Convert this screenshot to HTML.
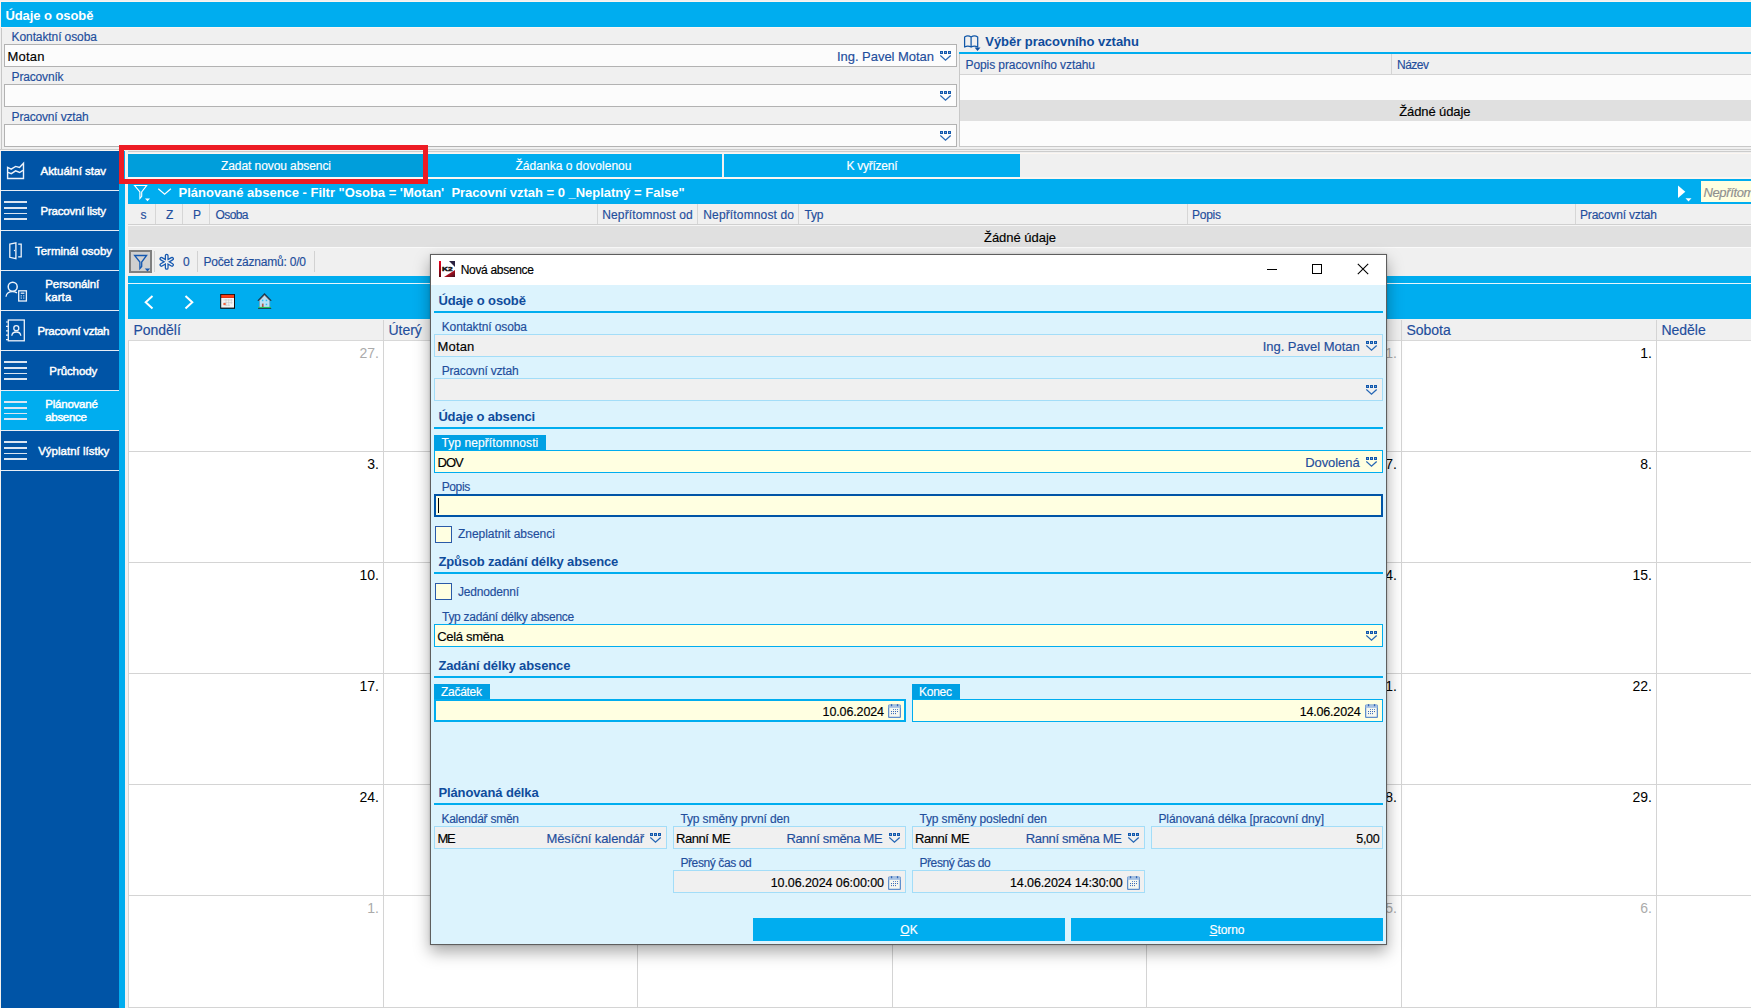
<!DOCTYPE html>
<html><head><meta charset="utf-8"><title>K2</title>
<style>
html,body{margin:0;padding:0;}
html{overflow:hidden;width:1751px;height:1008px;}
body{width:1751px;height:1008px;overflow:hidden;background:#F0F0F0;position:relative;font-family:"Liberation Sans",sans-serif;}
div,span,svg{position:absolute;box-sizing:border-box;}
span{white-space:pre;}
u{text-decoration:underline;}
</style></head><body>
<div style="left:0px;top:1px;width:1751px;height:1px;background:#FBF4EF;"></div>
<div style="left:0px;top:2px;width:1px;height:25px;background:#FBF4EF;"></div>
<div style="left:1px;top:2px;width:1750px;height:25px;background:#00ADEF;"></div>
<span style="left:5.40px;top:5px;font-size:13px;color:#fff;line-height:21px;font-weight:bold;letter-spacing:-0.071px;">Údaje o osobě</span>
<span style="left:11.60px;top:27px;font-size:12px;color:#1F4E9C;line-height:20px;-webkit-text-stroke:0.16px #1F4E9C;letter-spacing:-0.102px;">Kontaktní osoba</span>
<div style="left:4px;top:44px;width:953px;height:23px;background:#FCFCFC;border:1px solid #B2B2B2;"></div>
<svg style="left:940px;top:51px" width="12" height="11" viewBox="0 0 12 11"><rect x="0" y="0" width="3" height="3" fill="#1358AC"/><rect x="1" y="1" width="1" height="1" fill="#6FA0D6"/><rect x="4" y="0" width="3" height="3" fill="#1358AC"/><rect x="5" y="1" width="1" height="1" fill="#6FA0D6"/><rect x="8" y="0" width="3" height="3" fill="#1358AC"/><rect x="9" y="1" width="1" height="1" fill="#6FA0D6"/><path d="M0.3 4.5 L5.5 9.2 L10.7 4.5" fill="none" stroke="#2566B4" stroke-width="1.3"/></svg>
<span style="left:11.60px;top:67px;font-size:12px;color:#1F4E9C;line-height:20px;-webkit-text-stroke:0.16px #1F4E9C;letter-spacing:-0.170px;">Pracovník</span>
<div style="left:4px;top:84px;width:953px;height:23px;background:#FCFCFC;border:1px solid #B2B2B2;"></div>
<svg style="left:940px;top:91px" width="12" height="11" viewBox="0 0 12 11"><rect x="0" y="0" width="3" height="3" fill="#1358AC"/><rect x="1" y="1" width="1" height="1" fill="#6FA0D6"/><rect x="4" y="0" width="3" height="3" fill="#1358AC"/><rect x="5" y="1" width="1" height="1" fill="#6FA0D6"/><rect x="8" y="0" width="3" height="3" fill="#1358AC"/><rect x="9" y="1" width="1" height="1" fill="#6FA0D6"/><path d="M0.3 4.5 L5.5 9.2 L10.7 4.5" fill="none" stroke="#2566B4" stroke-width="1.3"/></svg>
<span style="left:11.60px;top:107px;font-size:12px;color:#1F4E9C;line-height:20px;-webkit-text-stroke:0.16px #1F4E9C;letter-spacing:-0.183px;">Pracovní vztah</span>
<div style="left:4px;top:124px;width:953px;height:23px;background:#FCFCFC;border:1px solid #B2B2B2;"></div>
<svg style="left:940px;top:131px" width="12" height="11" viewBox="0 0 12 11"><rect x="0" y="0" width="3" height="3" fill="#1358AC"/><rect x="1" y="1" width="1" height="1" fill="#6FA0D6"/><rect x="4" y="0" width="3" height="3" fill="#1358AC"/><rect x="5" y="1" width="1" height="1" fill="#6FA0D6"/><rect x="8" y="0" width="3" height="3" fill="#1358AC"/><rect x="9" y="1" width="1" height="1" fill="#6FA0D6"/><path d="M0.3 4.5 L5.5 9.2 L10.7 4.5" fill="none" stroke="#2566B4" stroke-width="1.3"/></svg>
<span style="left:7.60px;top:46px;font-size:13px;color:#000;line-height:21px;-webkit-text-stroke:0.16px #000;letter-spacing:0.167px;">Motan</span>
<span style="left:837.00px;top:46px;font-size:13px;color:#1F4E9C;line-height:21px;-webkit-text-stroke:0.16px #1F4E9C;letter-spacing:-0.037px;">Ing. Pavel Motan</span>
<span style="left:985.30px;top:31px;font-size:13px;color:#0F4C9C;line-height:21px;font-weight:bold;letter-spacing:-0.045px;">Výběr pracovního vztahu</span>
<div style="left:959px;top:52px;width:792px;height:2px;background:#00ADEF;"></div>
<div style="left:959px;top:54px;width:792px;height:93px;background:#FCFCFC;border-left:1px solid #C8C8C8;border-bottom:1px solid #C8C8C8;"></div>
<div style="left:960px;top:54px;width:791px;height:21px;background:#F0F0F0;border-bottom:1px solid #D4D4D4;"></div>
<div style="left:1391px;top:54px;width:1px;height:20px;background:#D4D4D4;"></div>
<span style="left:965.50px;top:55px;font-size:12px;color:#1F4E9C;line-height:20px;-webkit-text-stroke:0.16px #1F4E9C;letter-spacing:-0.087px;">Popis pracovního vztahu</span>
<span style="left:1397.00px;top:55px;font-size:12px;color:#1F4E9C;line-height:20px;-webkit-text-stroke:0.16px #1F4E9C;letter-spacing:-0.504px;">Název</span>
<div style="left:960px;top:100px;width:791px;height:21px;background:#E0E0E0;"></div>
<span style="left:1399.20px;top:101px;font-size:13px;color:#000;line-height:21px;-webkit-text-stroke:0.16px #000;letter-spacing:-0.098px;">Žádné údaje</span>
<svg style="left:962px;top:33px" width="20" height="19" viewBox="962 33 20 19"><path d="M964.6 37 Q967.8 34.9 971.1 37 V47 Q967.8 45.2 964.6 47 Z M971.1 37 Q974.4 34.9 977.7 37 V47 Q974.4 45.2 971.1 47 Z" fill="none" stroke="#1057A8" stroke-width="1.25" stroke-linejoin="round"/><path d="M974.6 47.5 H980.5 L977.5 50.9 Z" fill="#0F50A0"/></svg>
<div style="left:0px;top:149px;width:1751px;height:1px;background:#CCCCCC;"></div>
<div style="left:119px;top:151px;width:1632px;height:1px;background:#CCCCCC;"></div>
<div style="left:119px;top:153px;width:1632px;height:1px;background:#FCF6F1;"></div>
<div style="left:0px;top:150px;width:119px;height:1px;background:#FCF6F1;"></div>
<div style="left:1px;top:28px;width:1px;height:121px;background:#C6C6C6;"></div>
<div style="left:1px;top:27px;width:1750px;height:1px;background:#FBF6F2;"></div>
<div style="left:0px;top:151px;width:1px;height:857px;background:#F4F1EE;"></div>
<div style="left:1px;top:151px;width:118px;height:857px;background:#0054A6;"></div>
<div style="left:119px;top:151px;width:6px;height:857px;background:#00ADEF;"></div>
<div style="left:125px;top:150px;width:3px;height:858px;background:#F2F2F2;"></div>
<div style="left:1px;top:190px;width:118px;height:1px;background:#E8EEF6;"></div>
<div style="left:1px;top:230px;width:118px;height:1px;background:#E8EEF6;"></div>
<div style="left:1px;top:270px;width:118px;height:1px;background:#E8EEF6;"></div>
<div style="left:1px;top:310px;width:118px;height:1px;background:#E8EEF6;"></div>
<div style="left:1px;top:350px;width:118px;height:1px;background:#E8EEF6;"></div>
<div style="left:1px;top:390px;width:118px;height:1px;background:#E8EEF6;"></div>
<div style="left:1px;top:391px;width:118px;height:39px;background:#00ADEF;"></div>
<div style="left:1px;top:430px;width:118px;height:1px;background:#E8EEF6;"></div>
<div style="left:1px;top:470px;width:118px;height:1px;background:#E8EEF6;"></div>
<span style="left:40.50px;top:162px;font-size:11.5px;color:#fff;line-height:18px;letter-spacing:-0.028px;-webkit-text-stroke:0.45px #fff;">Aktuální stav</span>
<span style="left:40.50px;top:202px;font-size:11.5px;color:#fff;line-height:18px;letter-spacing:-0.222px;-webkit-text-stroke:0.45px #fff;">Pracovní listy</span>
<span style="left:35.00px;top:242px;font-size:11.5px;color:#fff;line-height:18px;letter-spacing:-0.026px;-webkit-text-stroke:0.45px #fff;">Terminál osoby</span>
<span style="left:45.30px;top:275px;font-size:11.5px;color:#fff;line-height:18px;letter-spacing:-0.109px;-webkit-text-stroke:0.45px #fff;">Personální</span>
<span style="left:45.30px;top:288px;font-size:11.5px;color:#fff;line-height:18px;letter-spacing:0.108px;-webkit-text-stroke:0.45px #fff;">karta</span>
<span style="left:37.50px;top:322px;font-size:11.5px;color:#fff;line-height:18px;letter-spacing:-0.313px;-webkit-text-stroke:0.45px #fff;">Pracovní vztah</span>
<span style="left:49.30px;top:362px;font-size:11.5px;color:#fff;line-height:18px;letter-spacing:-0.083px;-webkit-text-stroke:0.45px #fff;">Průchody</span>
<span style="left:45.30px;top:395px;font-size:11.5px;color:#fff;line-height:18px;letter-spacing:-0.231px;-webkit-text-stroke:0.45px #fff;">Plánované</span>
<span style="left:45.30px;top:408px;font-size:11.5px;color:#fff;line-height:18px;letter-spacing:-0.330px;-webkit-text-stroke:0.45px #fff;">absence</span>
<span style="left:38.20px;top:442px;font-size:11.5px;color:#fff;line-height:18px;-webkit-text-stroke:0.45px #fff;">Výplatní lístky</span>
<div style="left:4px;top:201.2px;width:23px;height:1.7px;background:#DCE6F2;"></div>
<div style="left:4px;top:207.2px;width:23px;height:1.7px;background:#DCE6F2;"></div>
<div style="left:4px;top:212.7px;width:23px;height:1.7px;background:#DCE6F2;"></div>
<div style="left:4px;top:218.2px;width:23px;height:1.7px;background:#DCE6F2;"></div>
<div style="left:4px;top:361.2px;width:23px;height:1.7px;background:#DCE6F2;"></div>
<div style="left:4px;top:367.2px;width:23px;height:1.7px;background:#DCE6F2;"></div>
<div style="left:4px;top:372.7px;width:23px;height:1.7px;background:#DCE6F2;"></div>
<div style="left:4px;top:378.2px;width:23px;height:1.7px;background:#DCE6F2;"></div>
<div style="left:4px;top:401.2px;width:23px;height:1.7px;background:#DCE6F2;"></div>
<div style="left:4px;top:407.2px;width:23px;height:1.7px;background:#DCE6F2;"></div>
<div style="left:4px;top:412.7px;width:23px;height:1.7px;background:#DCE6F2;"></div>
<div style="left:4px;top:418.2px;width:23px;height:1.7px;background:#DCE6F2;"></div>
<div style="left:4px;top:441.2px;width:23px;height:1.7px;background:#DCE6F2;"></div>
<div style="left:4px;top:447.2px;width:23px;height:1.7px;background:#DCE6F2;"></div>
<div style="left:4px;top:452.7px;width:23px;height:1.7px;background:#DCE6F2;"></div>
<div style="left:4px;top:458.2px;width:23px;height:1.7px;background:#DCE6F2;"></div>
<svg style="left:4px;top:160px" width="24" height="22" viewBox="4 160 24 22"><path d="M7.6 167.4 L11.2 169.2 L15.6 166.4 L19.5 167.4 L23.5 163.2 V178.5 H7.6 Z" fill="none" stroke="#EEF3FA" stroke-width="1.4" stroke-linejoin="miter"/><path d="M8 172.3 L11.3 173.7 L15.6 170.8 L19.6 172.5 L23 170.4" fill="none" stroke="#EEF3FA" stroke-width="1.4"/></svg>
<svg style="left:6px;top:240px" width="20" height="22" viewBox="6 240 20 22"><path d="M9.8 244.1 L15.9 242.9 V258.7 L9.8 257.3 Z" fill="none" stroke="#EEF3FA" stroke-width="1.3"/><path d="M18.2 244.2 H21.2 V256.8 H18.2" fill="none" stroke="#EEF3FA" stroke-width="1.3"/><circle cx="14.5" cy="250.5" r="0.7" fill="#EEF3FA"/></svg>
<svg style="left:3px;top:279px" width="26" height="25" viewBox="3 279 26 25"><circle cx="12.7" cy="286.7" r="4.5" fill="none" stroke="#EEF3FA" stroke-width="1.5"/><path d="M6 296.8 Q6.6 291.6 12.4 291.6 Q15 291.6 17 292.9" fill="none" stroke="#EEF3FA" stroke-width="1.3"/><rect x="18.7" y="290.8" width="7.7" height="10.2" fill="none" stroke="#EEF3FA" stroke-width="1.3"/><rect x="20.7" y="292.6" width="3.7" height="1.2" fill="#EEF3FA"/><g fill="#EEF3FA"><rect x="20.7" y="295.3" width="1.1" height="1.1"/><rect x="23.2" y="295.3" width="1.1" height="1.1"/><rect x="20.7" y="297.5" width="1.1" height="1.1"/><rect x="23.2" y="297.5" width="1.1" height="1.1"/></g></svg>
<svg style="left:4px;top:317px" width="24" height="27" viewBox="4 317 24 27"><rect x="8.3" y="320" width="16" height="20.8" fill="none" stroke="#EEF3FA" stroke-width="1.3"/><path d="M6 322 H8.5 M6 326.4 H8.5 M6 330.8 H8.5 M6 335.2 H8.5 M6 339.6 H8.5" stroke="#EEF3FA" stroke-width="1.2"/><circle cx="16.3" cy="328.2" r="2.5" fill="none" stroke="#EEF3FA" stroke-width="1.3"/><path d="M11.8 335.8 Q12.2 332 16.3 332 Q20.4 332 20.8 335.8" fill="none" stroke="#EEF3FA" stroke-width="1.3"/></svg>
<div style="left:128px;top:154px;width:296px;height:23px;background:#009EDB;"></div>
<div style="left:427px;top:154px;width:295px;height:23px;background:#00ADEF;"></div>
<div style="left:724px;top:154px;width:296px;height:23px;background:#00ADEF;"></div>
<div style="left:128px;top:177px;width:1623px;height:2px;background:#FBF6F2;"></div>
<span style="left:221.00px;top:156px;font-size:12px;color:#fff;line-height:20px;-webkit-text-stroke:0.16px #fff;letter-spacing:-0.079px;">Zadat novou absenci</span>
<span style="left:515.50px;top:156px;font-size:12px;color:#fff;line-height:20px;-webkit-text-stroke:0.16px #fff;letter-spacing:0.032px;">Žádanka o dovolenou</span>
<span style="left:846.50px;top:156px;font-size:12px;color:#fff;line-height:20px;-webkit-text-stroke:0.16px #fff;letter-spacing:-0.261px;">K vyřízení</span>
<div style="left:128px;top:179px;width:1623px;height:25px;background:#00ADEF;"></div>
<span style="left:178.60px;top:182px;font-size:13px;color:#fff;line-height:21px;font-weight:bold;letter-spacing:-0.016px;">Plánované absence - Filtr &quot;Osoba = &#x27;Motan&#x27;  Pracovní vztah = 0 _Neplatný = False&quot;</span>
<svg style="left:132px;top:183px" width="20" height="20" viewBox="132 183 20 20"><path d="M134.6 185.5 H146.6 L141.7 192 V196.4 L139.9 198.5 V192 Z" fill="none" stroke="#fff" stroke-width="1.15" stroke-linejoin="miter"/><path d="M145 198.6 H150 L147.5 201.3 Z" fill="#fff"/></svg>
<svg style="left:156px;top:186px" width="18" height="12" viewBox="156 186 18 12"><path d="M158.3 188.8 L164.6 194.2 L170.9 188.8" fill="none" stroke="#fff" stroke-width="1.25"/></svg>
<svg style="left:1676px;top:184px" width="18" height="20" viewBox="1676 184 18 20"><path d="M1678 185.5 L1685.3 191.8 L1678 198.1 Z" fill="#fff"/><path d="M1685.5 198.2 H1691.5 L1688.5 201.6 Z" fill="#fff"/></svg>
<div style="left:1701px;top:181px;width:50px;height:21px;background:#FFFFE1;"></div>
<span style="left:1703.40px;top:182px;font-size:13px;color:#8F8F8F;line-height:21px;-webkit-text-stroke:0.16px #8F8F8F;font-style:italic;letter-spacing:-0.352px;">Nepřítom</span>
<div style="left:128px;top:204px;width:1623px;height:21px;background:#F0F0F0;border-bottom:1px solid #D0D0D0;"></div>
<div style="left:155px;top:204px;width:1px;height:20px;background:#D6D6D6;"></div>
<div style="left:182px;top:204px;width:1px;height:20px;background:#D6D6D6;"></div>
<div style="left:209px;top:204px;width:1px;height:20px;background:#D6D6D6;"></div>
<div style="left:597px;top:204px;width:1px;height:20px;background:#D6D6D6;"></div>
<div style="left:697px;top:204px;width:1px;height:20px;background:#D6D6D6;"></div>
<div style="left:798px;top:204px;width:1px;height:20px;background:#D6D6D6;"></div>
<div style="left:1187px;top:204px;width:1px;height:20px;background:#D6D6D6;"></div>
<div style="left:1575px;top:204px;width:1px;height:20px;background:#D6D6D6;"></div>
<span style="left:140.40px;top:205px;font-size:12px;color:#1F4E9C;line-height:20px;-webkit-text-stroke:0.16px #1F4E9C;">s</span>
<span style="left:166.00px;top:205px;font-size:12px;color:#1F4E9C;line-height:20px;-webkit-text-stroke:0.16px #1F4E9C;">Z</span>
<span style="left:193.00px;top:205px;font-size:12px;color:#1F4E9C;line-height:20px;-webkit-text-stroke:0.16px #1F4E9C;">P</span>
<span style="left:215.50px;top:205px;font-size:12px;color:#1F4E9C;line-height:20px;-webkit-text-stroke:0.16px #1F4E9C;letter-spacing:-0.589px;">Osoba</span>
<span style="left:602.30px;top:205px;font-size:12px;color:#1F4E9C;line-height:20px;-webkit-text-stroke:0.16px #1F4E9C;letter-spacing:0.113px;">Nepřítomnost od</span>
<span style="left:703.30px;top:205px;font-size:12px;color:#1F4E9C;line-height:20px;-webkit-text-stroke:0.16px #1F4E9C;letter-spacing:0.142px;">Nepřítomnost do</span>
<span style="left:804.40px;top:205px;font-size:12px;color:#1F4E9C;line-height:20px;-webkit-text-stroke:0.16px #1F4E9C;letter-spacing:-0.171px;">Typ</span>
<span style="left:1192.00px;top:205px;font-size:12px;color:#1F4E9C;line-height:20px;-webkit-text-stroke:0.16px #1F4E9C;letter-spacing:-0.255px;">Popis</span>
<span style="left:1580.00px;top:205px;font-size:12px;color:#1F4E9C;line-height:20px;-webkit-text-stroke:0.16px #1F4E9C;letter-spacing:-0.183px;">Pracovní vztah</span>
<div style="left:128px;top:225px;width:1623px;height:1px;background:#F6F6F6;"></div>
<div style="left:128px;top:226px;width:1623px;height:21px;background:#E0E0E0;"></div>
<span style="left:984.00px;top:227px;font-size:13px;color:#000;line-height:21px;-webkit-text-stroke:0.16px #000;letter-spacing:-0.028px;">Žádné údaje</span>
<div style="left:128px;top:247px;width:1623px;height:1px;background:#FAFAFA;"></div>
<div style="left:128px;top:248px;width:1623px;height:28px;background:#F0F0F0;"></div>
<div style="left:129px;top:250px;width:23px;height:23px;background:#D0D0D0;border:2px solid #7F7F7F;"></div>
<svg style="left:132px;top:253px" width="20" height="20" viewBox="132 253 20 20"><path d="M134.6 255.5 H146.6 L141.7 262 V266.4 L139.9 268.5 V262 Z" fill="none" stroke="#1558B0" stroke-width="1.3" stroke-linejoin="miter"/><path d="M144.8 268.6 H150.2 L147.5 271.6 Z" fill="#1558B0"/></svg>
<div style="left:153.5px;top:251px;width:1px;height:21px;background:#D2D2D2;"></div>
<div style="left:196.5px;top:251px;width:1px;height:21px;background:#D2D2D2;"></div>
<div style="left:313.5px;top:251px;width:1px;height:21px;background:#D2D2D2;"></div>
<svg style="left:157px;top:252px" width="20" height="20" viewBox="157 252 20 20"><path d="M166.7 255.7 V267.9 M161.4 258.75 L172 264.85 M161.4 264.85 L172 258.75" fill="none" stroke="#1558B0" stroke-width="3.9" stroke-linecap="round"/><path d="M166.7 255.7 V267.9 M161.4 258.75 L172 264.85 M161.4 264.85 L172 258.75" fill="none" stroke="#F0F0F0" stroke-width="1.4" stroke-linecap="round"/></svg>
<span style="left:183.00px;top:252px;font-size:12px;color:#1F4E9C;line-height:20px;-webkit-text-stroke:0.16px #1F4E9C;">0</span>
<span style="left:203.50px;top:252px;font-size:12px;color:#1F4E9C;line-height:20px;-webkit-text-stroke:0.16px #1F4E9C;letter-spacing:-0.210px;">Počet záznamů: 0/0</span>
<div style="left:128px;top:276px;width:1623px;height:43px;background:#00ADEF;"></div>
<div style="left:128px;top:283px;width:1623px;height:1px;background:#E6F6FD;"></div>
<svg style="left:143px;top:294px" width="12" height="16" viewBox="0 0 12 16"><path d="M9.5 2 L2.7 8.3 L9.5 14.6" fill="none" stroke="#fff" stroke-width="2"/></svg>
<svg style="left:183px;top:294px" width="12" height="16" viewBox="0 0 12 16"><path d="M2.5 2 L9.3 8.3 L2.5 14.6" fill="none" stroke="#fff" stroke-width="2"/></svg>
<svg style="left:219px;top:293px" width="17" height="17" viewBox="219 293 17 17"><rect x="220.2" y="294" width="14.8" height="14.8" fill="#111"/><rect x="221.2" y="298" width="12.8" height="9.6" fill="#F4F4F4"/><rect x="221.2" y="294.8" width="12.8" height="3.1" fill="#F93C14"/><g stroke="#C4C4C4" stroke-width="0.6"><path d="M223.5 300 H232.5 M223.5 302.6 H232.5 M223.5 305.2 H230 M226 299 V306 M228.7 299 V306 M231.3 299 V304"/></g><rect x="223.4" y="303" width="2.3" height="2" fill="#F4623C"/></svg>
<svg style="left:256px;top:292px" width="18" height="18" viewBox="256 292 18 18"><path d="M259.4 300.2 L264.5 294.7 L269.8 300.2 V307.6 H259.4 Z" fill="#B9E0F5"/><path d="M259.5 300.3 V307.5 M269.7 300.3 V307.5" stroke="#6E9EC0" stroke-width="0.8"/><path d="M259.2 300.6 L264.5 295.1 L269.9 300.6" fill="none" stroke="#B0705E" stroke-width="0.9"/><path d="M258.3 300.4 L264.5 293.9 L270.8 300.4" fill="none" stroke="#1C3A4E" stroke-width="1.35" stroke-linecap="round"/><rect x="258.3" y="306.9" width="12.7" height="1.2" fill="#22C25C"/><rect x="258.1" y="308" width="13.1" height="0.9" fill="#1C3A4E"/><rect x="261.9" y="303.6" width="1.7" height="3.4" fill="#B05A4A"/><g fill="#2BBEF2"><rect x="261.9" y="299.7" width="1.5" height="1.5"/><rect x="265.7" y="299.7" width="1.5" height="1.5"/><rect x="265.7" y="303.7" width="1.5" height="1.5"/></g></svg>
<div style="left:128px;top:319px;width:1623px;height:22px;background:#F0F0F0;border-bottom:1px solid #D8D8D8;"></div>
<div style="left:128px;top:341px;width:1623px;height:667px;background:#fff;"></div>
<span style="left:133.40px;top:319px;font-size:14px;color:#1F4E9C;line-height:22px;-webkit-text-stroke:0.16px #1F4E9C;">Pondělí</span>
<span style="left:388.40px;top:319px;font-size:14px;color:#1F4E9C;line-height:22px;-webkit-text-stroke:0.16px #1F4E9C;">Úterý</span>
<span style="left:642.40px;top:319px;font-size:14px;color:#1F4E9C;line-height:22px;-webkit-text-stroke:0.16px #1F4E9C;">Středa</span>
<span style="left:897.40px;top:319px;font-size:14px;color:#1F4E9C;line-height:22px;-webkit-text-stroke:0.16px #1F4E9C;">Čtvrtek</span>
<span style="left:1151.40px;top:319px;font-size:14px;color:#1F4E9C;line-height:22px;-webkit-text-stroke:0.16px #1F4E9C;">Pátek</span>
<span style="left:1406.40px;top:319px;font-size:14px;color:#1F4E9C;line-height:22px;-webkit-text-stroke:0.16px #1F4E9C;">Sobota</span>
<span style="left:1661.40px;top:319px;font-size:14px;color:#1F4E9C;line-height:22px;-webkit-text-stroke:0.16px #1F4E9C;">Neděle</span>
<div style="left:128px;top:341px;width:1px;height:667px;background:#D4D4D4;"></div>
<div style="left:383px;top:320px;width:1px;height:688px;background:#D4D4D4;"></div>
<div style="left:637px;top:320px;width:1px;height:688px;background:#D4D4D4;"></div>
<div style="left:892px;top:320px;width:1px;height:688px;background:#D4D4D4;"></div>
<div style="left:1146px;top:320px;width:1px;height:688px;background:#D4D4D4;"></div>
<div style="left:1401px;top:320px;width:1px;height:688px;background:#D4D4D4;"></div>
<div style="left:1656px;top:320px;width:1px;height:688px;background:#D4D4D4;"></div>
<div style="left:128px;top:451px;width:1623px;height:1px;background:#D4D4D4;"></div>
<div style="left:128px;top:562px;width:1623px;height:1px;background:#D4D4D4;"></div>
<div style="left:128px;top:673px;width:1623px;height:1px;background:#D4D4D4;"></div>
<div style="left:128px;top:784px;width:1623px;height:1px;background:#D4D4D4;"></div>
<div style="left:128px;top:895px;width:1623px;height:1px;background:#D4D4D4;"></div>
<div style="left:128px;top:1007px;width:1623px;height:1px;background:#D4D4D4;"></div>
<span style="left:359.54px;top:342px;font-size:14px;color:#ABABAB;line-height:22px;-webkit-text-stroke:0px #000;">27.</span>
<span style="left:613.54px;top:342px;font-size:14px;color:#ABABAB;line-height:22px;-webkit-text-stroke:0px #000;">28.</span>
<span style="left:868.54px;top:342px;font-size:14px;color:#ABABAB;line-height:22px;-webkit-text-stroke:0px #000;">29.</span>
<span style="left:1122.54px;top:342px;font-size:14px;color:#ABABAB;line-height:22px;-webkit-text-stroke:0px #000;">30.</span>
<span style="left:1377.54px;top:342px;font-size:14px;color:#ABABAB;line-height:22px;-webkit-text-stroke:0px #000;">31.</span>
<span style="left:1640.32px;top:342px;font-size:14px;color:#000;line-height:22px;-webkit-text-stroke:0px #000;">1.</span>
<span style="left:367.32px;top:453px;font-size:14px;color:#000;line-height:22px;-webkit-text-stroke:0px #000;">3.</span>
<span style="left:621.32px;top:453px;font-size:14px;color:#000;line-height:22px;-webkit-text-stroke:0px #000;">4.</span>
<span style="left:876.32px;top:453px;font-size:14px;color:#000;line-height:22px;-webkit-text-stroke:0px #000;">5.</span>
<span style="left:1130.32px;top:453px;font-size:14px;color:#000;line-height:22px;-webkit-text-stroke:0px #000;">6.</span>
<span style="left:1385.32px;top:453px;font-size:14px;color:#000;line-height:22px;-webkit-text-stroke:0px #000;">7.</span>
<span style="left:1640.32px;top:453px;font-size:14px;color:#000;line-height:22px;-webkit-text-stroke:0px #000;">8.</span>
<span style="left:359.54px;top:564px;font-size:14px;color:#000;line-height:22px;-webkit-text-stroke:0px #000;">10.</span>
<span style="left:614.58px;top:564px;font-size:14px;color:#000;line-height:22px;-webkit-text-stroke:0px #000;">11.</span>
<span style="left:868.54px;top:564px;font-size:14px;color:#000;line-height:22px;-webkit-text-stroke:0px #000;">12.</span>
<span style="left:1122.54px;top:564px;font-size:14px;color:#000;line-height:22px;-webkit-text-stroke:0px #000;">13.</span>
<span style="left:1377.54px;top:564px;font-size:14px;color:#000;line-height:22px;-webkit-text-stroke:0px #000;">14.</span>
<span style="left:1632.54px;top:564px;font-size:14px;color:#000;line-height:22px;-webkit-text-stroke:0px #000;">15.</span>
<span style="left:359.54px;top:675px;font-size:14px;color:#000;line-height:22px;-webkit-text-stroke:0px #000;">17.</span>
<span style="left:613.54px;top:675px;font-size:14px;color:#000;line-height:22px;-webkit-text-stroke:0px #000;">18.</span>
<span style="left:868.54px;top:675px;font-size:14px;color:#000;line-height:22px;-webkit-text-stroke:0px #000;">19.</span>
<span style="left:1122.54px;top:675px;font-size:14px;color:#000;line-height:22px;-webkit-text-stroke:0px #000;">20.</span>
<span style="left:1377.54px;top:675px;font-size:14px;color:#000;line-height:22px;-webkit-text-stroke:0px #000;">21.</span>
<span style="left:1632.54px;top:675px;font-size:14px;color:#000;line-height:22px;-webkit-text-stroke:0px #000;">22.</span>
<span style="left:359.54px;top:786px;font-size:14px;color:#000;line-height:22px;-webkit-text-stroke:0px #000;">24.</span>
<span style="left:613.54px;top:786px;font-size:14px;color:#000;line-height:22px;-webkit-text-stroke:0px #000;">25.</span>
<span style="left:868.54px;top:786px;font-size:14px;color:#000;line-height:22px;-webkit-text-stroke:0px #000;">26.</span>
<span style="left:1122.54px;top:786px;font-size:14px;color:#000;line-height:22px;-webkit-text-stroke:0px #000;">27.</span>
<span style="left:1377.54px;top:786px;font-size:14px;color:#000;line-height:22px;-webkit-text-stroke:0px #000;">28.</span>
<span style="left:1632.54px;top:786px;font-size:14px;color:#000;line-height:22px;-webkit-text-stroke:0px #000;">29.</span>
<span style="left:367.32px;top:897px;font-size:14px;color:#ABABAB;line-height:22px;-webkit-text-stroke:0px #000;">1.</span>
<span style="left:621.32px;top:897px;font-size:14px;color:#ABABAB;line-height:22px;-webkit-text-stroke:0px #000;">2.</span>
<span style="left:876.32px;top:897px;font-size:14px;color:#ABABAB;line-height:22px;-webkit-text-stroke:0px #000;">3.</span>
<span style="left:1130.32px;top:897px;font-size:14px;color:#ABABAB;line-height:22px;-webkit-text-stroke:0px #000;">4.</span>
<span style="left:1385.32px;top:897px;font-size:14px;color:#ABABAB;line-height:22px;-webkit-text-stroke:0px #000;">5.</span>
<span style="left:1640.32px;top:897px;font-size:14px;color:#ABABAB;line-height:22px;-webkit-text-stroke:0px #000;">6.</span>
<div style="left:430px;top:254px;width:957px;height:691px;background:#DCF3FD;border:1px solid #5E5E5E;box-shadow:0 7px 15px rgba(0,0,0,0.34), 0 0 2px rgba(0,0,0,0.2);"></div>
<div style="left:431px;top:255px;width:955px;height:30px;background:#fff;"></div>
<svg style="left:439px;top:261px" width="16" height="16" viewBox="0 0 16 16"><rect x="0" y="0" width="16" height="16" fill="#fff"/><defs><linearGradient id="k2g" x1="0" y1="0" x2="0" y2="1"><stop offset="0" stop-color="#F0001E"/><stop offset="1" stop-color="#5A0810"/></linearGradient><linearGradient id="k2h" x1="0" y1="0" x2="1" y2="1"><stop offset="0.3" stop-color="#E0101E"/><stop offset="1" stop-color="#3A1020"/></linearGradient></defs><rect x="0" y="0" width="2" height="16" fill="url(#k2g)"/><path d="M10 0 H16 V6 Z" fill="#2A2140"/><path d="M16 9 V16 H5 Z" fill="url(#k2h)"/><text x="3" y="10.3" font-family="Liberation Sans" font-weight="bold" font-size="5.8" fill="#111" stroke="#111" stroke-width="0.45" textLength="10.6" lengthAdjust="spacingAndGlyphs">K2</text></svg>
<span style="left:460.70px;top:260px;font-size:12px;color:#000;line-height:20px;-webkit-text-stroke:0.16px #000;letter-spacing:-0.311px;">Nová absence</span>
<div style="left:1267px;top:269px;width:10px;height:1px;background:#000;"></div>
<div style="left:1312px;top:264px;width:10px;height:10px;background:transparent;border:1px solid #000;"></div>
<svg style="left:1357px;top:263px" width="12" height="12" viewBox="0 0 12 12"><path d="M0.8 0.8 L11.2 11.2 M11.2 0.8 L0.8 11.2" stroke="#000" stroke-width="1.1"/></svg>
<span style="left:438.40px;top:290px;font-size:13px;color:#0F4C9C;line-height:21px;font-weight:bold;letter-spacing:-0.113px;">Údaje o osobě</span>
<div style="left:434px;top:311px;width:949px;height:2px;background:#00ADEF;"></div>
<span style="left:438.40px;top:406px;font-size:13px;color:#0F4C9C;line-height:21px;font-weight:bold;letter-spacing:-0.156px;">Údaje o absenci</span>
<div style="left:434px;top:427px;width:949px;height:2px;background:#00ADEF;"></div>
<span style="left:438.40px;top:551px;font-size:13px;color:#0F4C9C;line-height:21px;font-weight:bold;letter-spacing:-0.139px;">Způsob zadání délky absence</span>
<div style="left:434px;top:572px;width:949px;height:2px;background:#00ADEF;"></div>
<span style="left:438.40px;top:655px;font-size:13px;color:#0F4C9C;line-height:21px;font-weight:bold;letter-spacing:-0.126px;">Zadání délky absence</span>
<div style="left:434px;top:676px;width:949px;height:2px;background:#00ADEF;"></div>
<span style="left:438.40px;top:782px;font-size:13px;color:#0F4C9C;line-height:21px;font-weight:bold;letter-spacing:-0.113px;">Plánovaná délka</span>
<div style="left:434px;top:803px;width:949px;height:2px;background:#00ADEF;"></div>
<span style="left:441.70px;top:317px;font-size:12px;color:#1F4E9C;line-height:20px;-webkit-text-stroke:0.16px #1F4E9C;letter-spacing:-0.102px;">Kontaktní osoba</span>
<div style="left:434px;top:334px;width:949px;height:23px;background:#F0F0F0;border:1px solid #A3DDF8;"></div>
<span style="left:437.50px;top:336px;font-size:13px;color:#000;line-height:21px;-webkit-text-stroke:0.16px #000;letter-spacing:0.167px;">Motan</span>
<span style="left:1262.70px;top:336px;font-size:13px;color:#1F4E9C;line-height:21px;-webkit-text-stroke:0.16px #1F4E9C;letter-spacing:-0.037px;">Ing. Pavel Motan</span>
<svg style="left:1366px;top:341px" width="12" height="11" viewBox="0 0 12 11"><rect x="0" y="0" width="3" height="3" fill="#1358AC"/><rect x="1" y="1" width="1" height="1" fill="#6FA0D6"/><rect x="4" y="0" width="3" height="3" fill="#1358AC"/><rect x="5" y="1" width="1" height="1" fill="#6FA0D6"/><rect x="8" y="0" width="3" height="3" fill="#1358AC"/><rect x="9" y="1" width="1" height="1" fill="#6FA0D6"/><path d="M0.3 4.5 L5.5 9.2 L10.7 4.5" fill="none" stroke="#2566B4" stroke-width="1.3"/></svg>
<span style="left:441.70px;top:361px;font-size:12px;color:#1F4E9C;line-height:20px;-webkit-text-stroke:0.16px #1F4E9C;letter-spacing:-0.183px;">Pracovní vztah</span>
<div style="left:434px;top:378px;width:949px;height:23px;background:#F0F0F0;border:1px solid #A3DDF8;"></div>
<svg style="left:1366px;top:385px" width="12" height="11" viewBox="0 0 12 11"><rect x="0" y="0" width="3" height="3" fill="#1358AC"/><rect x="1" y="1" width="1" height="1" fill="#6FA0D6"/><rect x="4" y="0" width="3" height="3" fill="#1358AC"/><rect x="5" y="1" width="1" height="1" fill="#6FA0D6"/><rect x="8" y="0" width="3" height="3" fill="#1358AC"/><rect x="9" y="1" width="1" height="1" fill="#6FA0D6"/><path d="M0.3 4.5 L5.5 9.2 L10.7 4.5" fill="none" stroke="#2566B4" stroke-width="1.3"/></svg>
<div style="left:434px;top:435px;width:112px;height:16px;background:#00A0E4;"></div>
<span style="left:441.40px;top:433px;font-size:12px;color:#fff;line-height:20px;-webkit-text-stroke:0.16px #fff;letter-spacing:0.095px;">Typ nepřítomnosti</span>
<div style="left:434px;top:450px;width:949px;height:23px;background:#FFFFE1;border:1px solid #00ADEF;"></div>
<span style="left:437.60px;top:452px;font-size:13px;color:#000;line-height:21px;-webkit-text-stroke:0.16px #000;letter-spacing:-1.086px;">DOV</span>
<span style="left:1305.20px;top:452px;font-size:13px;color:#1F4E9C;line-height:21px;-webkit-text-stroke:0.16px #1F4E9C;letter-spacing:-0.061px;">Dovolená</span>
<svg style="left:1366px;top:457px" width="12" height="11" viewBox="0 0 12 11"><rect x="0" y="0" width="3" height="3" fill="#1358AC"/><rect x="1" y="1" width="1" height="1" fill="#6FA0D6"/><rect x="4" y="0" width="3" height="3" fill="#1358AC"/><rect x="5" y="1" width="1" height="1" fill="#6FA0D6"/><rect x="8" y="0" width="3" height="3" fill="#1358AC"/><rect x="9" y="1" width="1" height="1" fill="#6FA0D6"/><path d="M0.3 4.5 L5.5 9.2 L10.7 4.5" fill="none" stroke="#2566B4" stroke-width="1.3"/></svg>
<span style="left:441.70px;top:477px;font-size:12px;color:#1F4E9C;line-height:20px;-webkit-text-stroke:0.16px #1F4E9C;letter-spacing:-0.380px;">Popis</span>
<div style="left:434px;top:494px;width:949px;height:23px;background:#FFFFE1;border:2px solid #0054A6;"></div>
<div style="left:437.5px;top:498px;width:1px;height:15px;background:#000;"></div>
<div style="left:435px;top:526px;width:17px;height:17px;background:#FFFFE1;border:1px solid #2A5AA8;"></div>
<span style="left:458.00px;top:524px;font-size:12px;color:#1F4E9C;line-height:20px;-webkit-text-stroke:0.16px #1F4E9C;letter-spacing:-0.035px;">Zneplatnit absenci</span>
<div style="left:435px;top:583px;width:17px;height:17px;background:#FFFFE1;border:1px solid #2A5AA8;"></div>
<span style="left:458.00px;top:582px;font-size:12px;color:#1F4E9C;line-height:20px;-webkit-text-stroke:0.16px #1F4E9C;letter-spacing:-0.192px;">Jednodenní</span>
<span style="left:442.00px;top:607px;font-size:12px;color:#1F4E9C;line-height:20px;-webkit-text-stroke:0.16px #1F4E9C;letter-spacing:-0.285px;">Typ zadání délky absence</span>
<div style="left:434px;top:624px;width:949px;height:23px;background:#FFFFE1;border:1px solid #00ADEF;"></div>
<span style="left:437.30px;top:626px;font-size:13px;color:#000;line-height:21px;-webkit-text-stroke:0.16px #000;letter-spacing:-0.319px;">Celá směna</span>
<svg style="left:1366px;top:631px" width="12" height="11" viewBox="0 0 12 11"><rect x="0" y="0" width="3" height="3" fill="#1358AC"/><rect x="1" y="1" width="1" height="1" fill="#6FA0D6"/><rect x="4" y="0" width="3" height="3" fill="#1358AC"/><rect x="5" y="1" width="1" height="1" fill="#6FA0D6"/><rect x="8" y="0" width="3" height="3" fill="#1358AC"/><rect x="9" y="1" width="1" height="1" fill="#6FA0D6"/><path d="M0.3 4.5 L5.5 9.2 L10.7 4.5" fill="none" stroke="#2566B4" stroke-width="1.3"/></svg>
<div style="left:434px;top:684px;width:56px;height:16px;background:#00A0E4;"></div>
<span style="left:441.00px;top:682px;font-size:12px;color:#fff;line-height:20px;-webkit-text-stroke:0.16px #fff;letter-spacing:-0.281px;">Začátek</span>
<div style="left:434px;top:699px;width:472px;height:23px;background:#FFFFE1;border:2px solid #00ADEF;"></div>
<span style="left:822.60px;top:702px;font-size:12.5px;color:#000;line-height:20px;-webkit-text-stroke:0.16px #000;letter-spacing:-0.129px;">10.06.2024</span>
<svg style="left:887.5px;top:704px" width="13" height="14" viewBox="0 0 13 14"><rect x="0.6" y="1.1" width="11.8" height="12.3" rx="1" fill="#F6F8F0" stroke="#5F8FCC" stroke-width="1.3"/><rect x="0.6" y="1.1" width="11.8" height="2.8" fill="#A9C3E4"/><rect x="2.9" y="0.2" width="1.3" height="2" fill="#2F62B4"/><rect x="8.9" y="0.2" width="1.3" height="2" fill="#2F62B4"/><rect x="5" y="5" width="1" height="1" fill="#5C86C6"/><rect x="7" y="5" width="1" height="1" fill="#5C86C6"/><rect x="9" y="5" width="1" height="1" fill="#5C86C6"/><rect x="3" y="7.05" width="1" height="1" fill="#2F62B4"/><rect x="5" y="7.05" width="1" height="1" fill="#2F62B4"/><rect x="7" y="7.05" width="1" height="1" fill="#2F62B4"/><rect x="9" y="7.05" width="1" height="1" fill="#2F62B4"/><rect x="3" y="9.1" width="1" height="1" fill="#2F62B4"/><rect x="5" y="9.1" width="1" height="1" fill="#2F62B4"/><rect x="7" y="9.1" width="1" height="1" fill="#2F62B4"/></svg>
<div style="left:912px;top:684px;width:48px;height:16px;background:#00A0E4;"></div>
<span style="left:919.00px;top:682px;font-size:12px;color:#fff;line-height:20px;-webkit-text-stroke:0.16px #fff;letter-spacing:-0.257px;">Konec</span>
<div style="left:912px;top:699px;width:471px;height:23px;background:#FFFFE1;border:1px solid #00ADEF;"></div>
<span style="left:1299.80px;top:702px;font-size:12.5px;color:#000;line-height:20px;-webkit-text-stroke:0.16px #000;letter-spacing:-0.196px;">14.06.2024</span>
<svg style="left:1364.5px;top:704px" width="13" height="14" viewBox="0 0 13 14"><rect x="0.6" y="1.1" width="11.8" height="12.3" rx="1" fill="#F6F8F0" stroke="#5F8FCC" stroke-width="1.3"/><rect x="0.6" y="1.1" width="11.8" height="2.8" fill="#A9C3E4"/><rect x="2.9" y="0.2" width="1.3" height="2" fill="#2F62B4"/><rect x="8.9" y="0.2" width="1.3" height="2" fill="#2F62B4"/><rect x="5" y="5" width="1" height="1" fill="#5C86C6"/><rect x="7" y="5" width="1" height="1" fill="#5C86C6"/><rect x="9" y="5" width="1" height="1" fill="#5C86C6"/><rect x="3" y="7.05" width="1" height="1" fill="#2F62B4"/><rect x="5" y="7.05" width="1" height="1" fill="#2F62B4"/><rect x="7" y="7.05" width="1" height="1" fill="#2F62B4"/><rect x="9" y="7.05" width="1" height="1" fill="#2F62B4"/><rect x="3" y="9.1" width="1" height="1" fill="#2F62B4"/><rect x="5" y="9.1" width="1" height="1" fill="#2F62B4"/><rect x="7" y="9.1" width="1" height="1" fill="#2F62B4"/></svg>
<span style="left:441.40px;top:809px;font-size:12px;color:#1F4E9C;line-height:20px;-webkit-text-stroke:0.16px #1F4E9C;letter-spacing:-0.260px;">Kalendář směn</span>
<div style="left:434px;top:826px;width:233px;height:23px;background:#F0F0F0;border:1px solid #A3DDF8;"></div>
<span style="left:437.50px;top:828px;font-size:13px;color:#000;line-height:21px;-webkit-text-stroke:0.16px #000;letter-spacing:-1.300px;">ME</span>
<span style="left:546.50px;top:828px;font-size:13px;color:#1F4E9C;line-height:21px;-webkit-text-stroke:0.16px #1F4E9C;letter-spacing:-0.100px;">Měsíční kalendář</span>
<svg style="left:650px;top:833px" width="12" height="11" viewBox="0 0 12 11"><rect x="0" y="0" width="3" height="3" fill="#1358AC"/><rect x="1" y="1" width="1" height="1" fill="#6FA0D6"/><rect x="4" y="0" width="3" height="3" fill="#1358AC"/><rect x="5" y="1" width="1" height="1" fill="#6FA0D6"/><rect x="8" y="0" width="3" height="3" fill="#1358AC"/><rect x="9" y="1" width="1" height="1" fill="#6FA0D6"/><path d="M0.3 4.5 L5.5 9.2 L10.7 4.5" fill="none" stroke="#2566B4" stroke-width="1.3"/></svg>
<span style="left:680.40px;top:809px;font-size:12px;color:#1F4E9C;line-height:20px;-webkit-text-stroke:0.16px #1F4E9C;letter-spacing:-0.111px;">Typ směny první den</span>
<div style="left:673px;top:826px;width:233px;height:23px;background:#F0F0F0;border:1px solid #A3DDF8;"></div>
<span style="left:676.00px;top:828px;font-size:13px;color:#000;line-height:21px;-webkit-text-stroke:0.16px #000;letter-spacing:-0.443px;">Ranní ME</span>
<span style="left:786.40px;top:828px;font-size:13px;color:#1F4E9C;line-height:21px;-webkit-text-stroke:0.16px #1F4E9C;letter-spacing:-0.326px;">Ranní směna ME</span>
<svg style="left:889px;top:833px" width="12" height="11" viewBox="0 0 12 11"><rect x="0" y="0" width="3" height="3" fill="#1358AC"/><rect x="1" y="1" width="1" height="1" fill="#6FA0D6"/><rect x="4" y="0" width="3" height="3" fill="#1358AC"/><rect x="5" y="1" width="1" height="1" fill="#6FA0D6"/><rect x="8" y="0" width="3" height="3" fill="#1358AC"/><rect x="9" y="1" width="1" height="1" fill="#6FA0D6"/><path d="M0.3 4.5 L5.5 9.2 L10.7 4.5" fill="none" stroke="#2566B4" stroke-width="1.3"/></svg>
<span style="left:919.40px;top:809px;font-size:12px;color:#1F4E9C;line-height:20px;-webkit-text-stroke:0.16px #1F4E9C;letter-spacing:-0.118px;">Typ směny poslední den</span>
<div style="left:912px;top:826px;width:233px;height:23px;background:#F0F0F0;border:1px solid #A3DDF8;"></div>
<span style="left:915.00px;top:828px;font-size:13px;color:#000;line-height:21px;-webkit-text-stroke:0.16px #000;letter-spacing:-0.443px;">Ranní ME</span>
<span style="left:1025.70px;top:828px;font-size:13px;color:#1F4E9C;line-height:21px;-webkit-text-stroke:0.16px #1F4E9C;letter-spacing:-0.326px;">Ranní směna ME</span>
<svg style="left:1128px;top:833px" width="12" height="11" viewBox="0 0 12 11"><rect x="0" y="0" width="3" height="3" fill="#1358AC"/><rect x="1" y="1" width="1" height="1" fill="#6FA0D6"/><rect x="4" y="0" width="3" height="3" fill="#1358AC"/><rect x="5" y="1" width="1" height="1" fill="#6FA0D6"/><rect x="8" y="0" width="3" height="3" fill="#1358AC"/><rect x="9" y="1" width="1" height="1" fill="#6FA0D6"/><path d="M0.3 4.5 L5.5 9.2 L10.7 4.5" fill="none" stroke="#2566B4" stroke-width="1.3"/></svg>
<span style="left:1158.40px;top:809px;font-size:12px;color:#1F4E9C;line-height:20px;-webkit-text-stroke:0.16px #1F4E9C;letter-spacing:-0.064px;">Plánovaná délka [pracovní dny]</span>
<div style="left:1151px;top:826px;width:232px;height:23px;background:#F0F0F0;border:1px solid #A3DDF8;"></div>
<span style="left:1356.30px;top:829px;font-size:12.5px;color:#000;line-height:20px;-webkit-text-stroke:0.16px #000;letter-spacing:-0.310px;">5,00</span>
<span style="left:680.40px;top:853px;font-size:12px;color:#1F4E9C;line-height:20px;-webkit-text-stroke:0.16px #1F4E9C;letter-spacing:-0.387px;">Přesný čas od</span>
<div style="left:673px;top:870px;width:233px;height:23px;background:#F0F0F0;border:1px solid #A3DDF8;"></div>
<span style="left:770.70px;top:873px;font-size:12.5px;color:#000;line-height:20px;-webkit-text-stroke:0.16px #000;letter-spacing:-0.078px;">10.06.2024 06:00:00</span>
<svg style="left:887.5px;top:875.5px" width="13" height="14" viewBox="0 0 13 14"><rect x="0.6" y="1.1" width="11.8" height="12.3" rx="1" fill="#F6F8F0" stroke="#5F8FCC" stroke-width="1.3"/><rect x="0.6" y="1.1" width="11.8" height="2.8" fill="#A9C3E4"/><rect x="2.9" y="0.2" width="1.3" height="2" fill="#2F62B4"/><rect x="8.9" y="0.2" width="1.3" height="2" fill="#2F62B4"/><rect x="5" y="5" width="1" height="1" fill="#5C86C6"/><rect x="7" y="5" width="1" height="1" fill="#5C86C6"/><rect x="9" y="5" width="1" height="1" fill="#5C86C6"/><rect x="3" y="7.05" width="1" height="1" fill="#2F62B4"/><rect x="5" y="7.05" width="1" height="1" fill="#2F62B4"/><rect x="7" y="7.05" width="1" height="1" fill="#2F62B4"/><rect x="9" y="7.05" width="1" height="1" fill="#2F62B4"/><rect x="3" y="9.1" width="1" height="1" fill="#2F62B4"/><rect x="5" y="9.1" width="1" height="1" fill="#2F62B4"/><rect x="7" y="9.1" width="1" height="1" fill="#2F62B4"/></svg>
<span style="left:919.40px;top:853px;font-size:12px;color:#1F4E9C;line-height:20px;-webkit-text-stroke:0.16px #1F4E9C;letter-spacing:-0.387px;">Přesný čas do</span>
<div style="left:912px;top:870px;width:233px;height:23px;background:#F0F0F0;border:1px solid #A3DDF8;"></div>
<span style="left:1010.00px;top:873px;font-size:12.5px;color:#000;line-height:20px;-webkit-text-stroke:0.16px #000;letter-spacing:-0.111px;">14.06.2024 14:30:00</span>
<svg style="left:1126.6px;top:875.5px" width="13" height="14" viewBox="0 0 13 14"><rect x="0.6" y="1.1" width="11.8" height="12.3" rx="1" fill="#F6F8F0" stroke="#5F8FCC" stroke-width="1.3"/><rect x="0.6" y="1.1" width="11.8" height="2.8" fill="#A9C3E4"/><rect x="2.9" y="0.2" width="1.3" height="2" fill="#2F62B4"/><rect x="8.9" y="0.2" width="1.3" height="2" fill="#2F62B4"/><rect x="5" y="5" width="1" height="1" fill="#5C86C6"/><rect x="7" y="5" width="1" height="1" fill="#5C86C6"/><rect x="9" y="5" width="1" height="1" fill="#5C86C6"/><rect x="3" y="7.05" width="1" height="1" fill="#2F62B4"/><rect x="5" y="7.05" width="1" height="1" fill="#2F62B4"/><rect x="7" y="7.05" width="1" height="1" fill="#2F62B4"/><rect x="9" y="7.05" width="1" height="1" fill="#2F62B4"/><rect x="3" y="9.1" width="1" height="1" fill="#2F62B4"/><rect x="5" y="9.1" width="1" height="1" fill="#2F62B4"/><rect x="7" y="9.1" width="1" height="1" fill="#2F62B4"/></svg>
<div style="left:753px;top:918px;width:312px;height:23px;background:#00ADEF;"></div>
<div style="left:1071px;top:918px;width:312px;height:23px;background:#00ADEF;"></div>
<span style="left:900.33px;top:920px;font-size:12px;color:#fff;line-height:20px;-webkit-text-stroke:0.16px #fff;"><u>O</u>K</span>
<span style="left:1209.50px;top:920px;font-size:12px;color:#fff;line-height:20px;-webkit-text-stroke:0.16px #fff;letter-spacing:-0.071px;"><u>S</u>torno</span>
<div style="left:119px;top:145px;width:309px;height:39px;background:transparent;border:5px solid #ED1C24;"></div>
</body></html>
